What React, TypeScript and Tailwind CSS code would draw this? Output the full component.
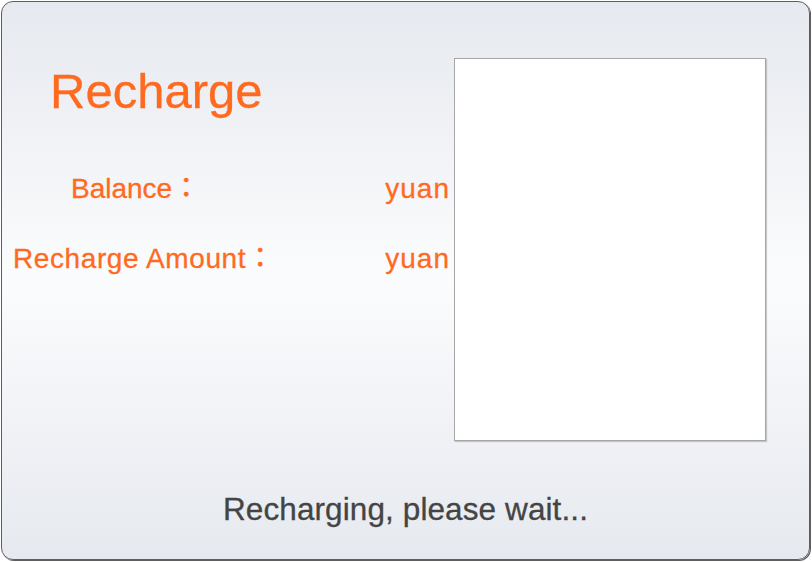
import React from 'react';

const FONT = "font-['Liberation_Sans','Noto_Sans_CJK_JP',sans-serif]";

const InfoRow: React.FC<{ label: string; indent: string }> = ({ label, indent }) => (
  <div className="flex items-baseline justify-between h-[70px]">
    <span className={indent}>{label}</span>
    <span className="tracking-[1px]">yuan</span>
  </div>
);

const App: React.FC = () => {
  return (
    <div className={`w-[812px] h-[562px] p-[1px] bg-white ${FONT}`}>
      <div className="w-[809px] h-[559px] rounded-[12px] border border-[#5e5e5e] shadow-[1px_1px_0_#5e5e5e] bg-linear-to-b from-[#e6e9ef] via-[#fbfcfd] to-[#e6e9ef] flex flex-col overflow-hidden">
        <div className="flex">
          {/* Left: title + balance info */}
          <div className="w-[448px] text-[#ff6a1f] [-webkit-text-stroke:0.3px_#ff6a1f]">
            <h1 className="pl-[48px] pt-[65px] text-[49px] leading-none">Recharge</h1>
            <div className="mt-[59px] text-[28px] leading-none">
              <InfoRow label="Balance：" indent="pl-[69px]" />
              <InfoRow label="Recharge Amount：" indent="pl-[11px] tracking-[0.6px]" />
            </div>
          </div>

          {/* Right: QR / code area */}
          <div className="ml-[4px] mt-[56px] w-[312px] h-[383px] bg-white border border-[#a6a6a6] shadow-[1px_1px_1px_rgba(0,0,0,0.18)]" />
        </div>

        <div className="flex-1 flex items-center justify-center pt-[20px]">
          <p className="text-[31.5px] leading-none tracking-[0.1px] text-[#444] [-webkit-text-stroke:0.3px_#444]">Recharging, please wait...</p>
        </div>
      </div>
    </div>
  );
};

export default App;
